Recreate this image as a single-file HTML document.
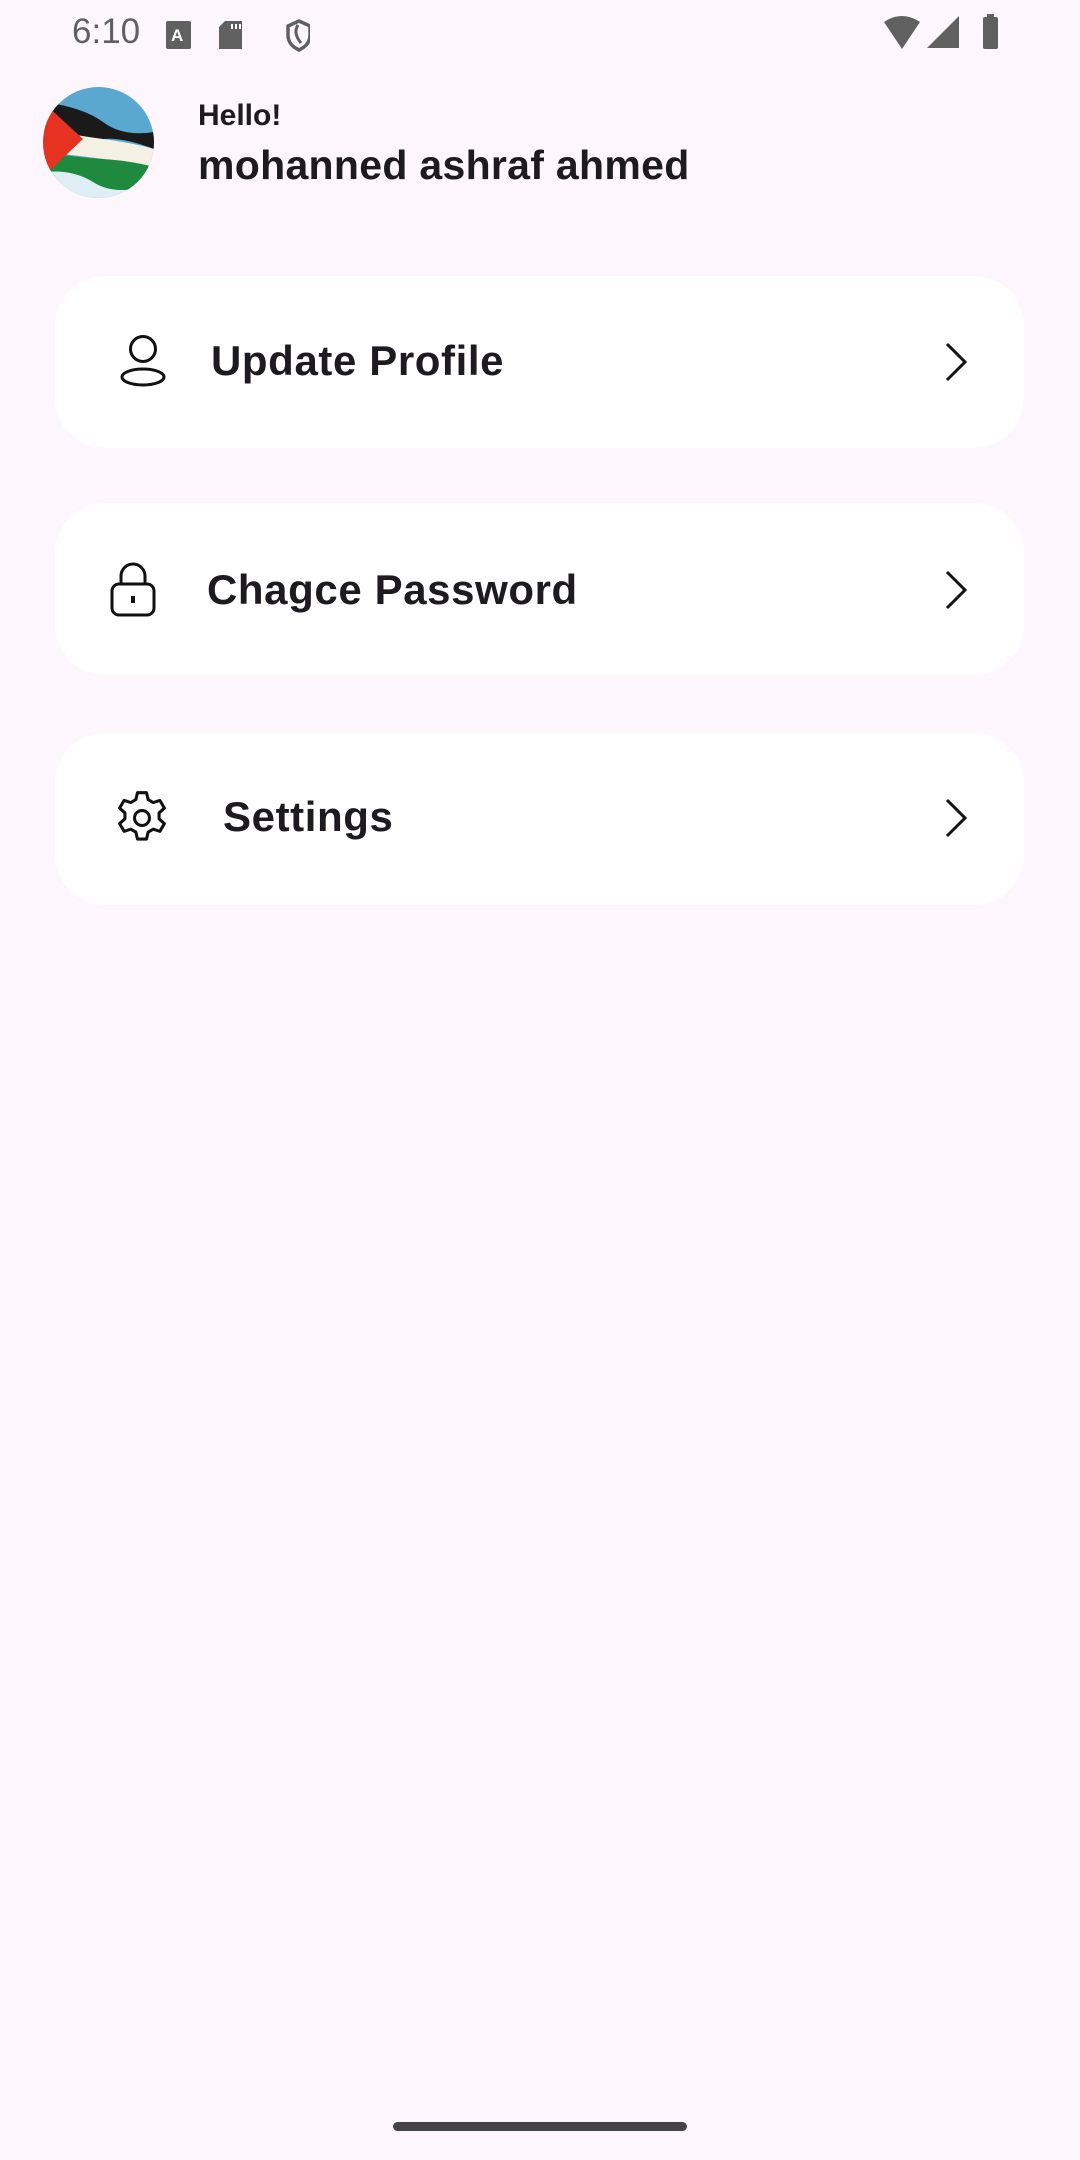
<!DOCTYPE html>
<html><head><meta charset="utf-8"><style>
*{margin:0;padding:0;box-sizing:border-box}
body{width:1080px;height:2160px;background:#fdf7fd;font-family:"Liberation Sans",sans-serif;position:relative;overflow:hidden;color:#1d1b20}
.abs{position:absolute}
.card{position:absolute;left:55px;width:969px;height:172px;background:#fff;border-radius:50px}
.lbl{position:absolute;font-size:42px;font-weight:bold;color:#1d1b20;line-height:1;letter-spacing:0.6px}
</style></head><body>
<div class="abs" style="left:72px;top:12px;font-size:35px;color:#606060">6:10</div>
<svg class="abs" style="left:160px;top:17px" width="150" height="36" viewBox="0 0 150 36">
<rect x="6" y="4" width="25" height="28" rx="2" fill="#606060"/><text x="11" y="24" font-size="17" font-weight="bold" fill="#fff" font-family="Liberation Sans">A</text>
<path d="M65 4h17v28h-23v-22z" fill="#606060"/><rect x="71" y="7" width="2" height="5" fill="#fff"/><rect x="75" y="7" width="2" height="5" fill="#fff"/><rect x="79" y="7" width="2" height="5" fill="#fff"/>
<path d="M139 4l11 5v9c0 8-5 12-11 15-6-3-11-7-11-15v-9z" fill="none" stroke="#606060" stroke-width="3.5"/><path d="M138 8c-4 6-2 12 3 18" fill="none" stroke="#606060" stroke-width="3"/>
</svg>
<svg class="abs" style="left:880px;top:14px" width="125" height="38" viewBox="0 0 125 38">
<path d="M4 8q18-12 36 0l-18 27z" fill="#606060"/>
<path d="M47 34l32-32v32z" fill="#606060"/>
<rect x="103" y="3" width="15" height="32" rx="2" fill="#606060"/><rect x="107" y="0" width="7" height="4" fill="#606060"/>
</svg>
<svg class="abs" style="left:43px;top:87px" width="111" height="111" viewBox="0 0 111 111">
<defs><clipPath id="c"><circle cx="55.5" cy="55.5" r="55.5"/></clipPath></defs>
<g clip-path="url(#c)">
<rect width="111" height="111" fill="#5aa7cf"/>
<rect y="80" width="111" height="31" fill="#dfeef5"/>
<path d="M0 15 Q40 20 60 35 T111 45 L111 62 Q80 50 60 52 T0 42z" fill="#1a1a1a"/>
<path d="M0 42 Q30 48 60 52 T111 62 L111 80 Q80 75 60 72 T0 65z" fill="#f4f0e4"/>
<path d="M0 65 Q30 70 60 72 T111 80 L100 100 Q70 108 50 95 T0 85z" fill="#1f8a3e"/>
<path d="M0 15 L40 52 L0 90z" fill="#e53221"/>
</g></svg>
<div class="abs" style="left:198px;top:99px;font-size:30px;font-weight:bold">Hello!</div>
<div class="abs" style="left:198px;top:142px;font-size:41px;font-weight:bold;letter-spacing:0.3px">mohanned ashraf ahmed</div>

<div class="card" style="top:276px"></div>
<div class="card" style="top:503px"></div>
<div class="card" style="top:733px"></div>

<svg class="abs" style="left:118px;top:334px" width="50" height="56" viewBox="0 0 50 56" fill="none" stroke="#111" stroke-width="3">
<circle cx="25" cy="15" r="12.5"/><ellipse cx="25" cy="43" rx="21" ry="8"/></svg>
<div class="lbl" style="left:211px;top:340px">Update Profile</div>

<svg class="abs" style="left:108px;top:560px" width="52" height="60" viewBox="0 0 52 60" fill="none" stroke="#111" stroke-width="3">
<path d="M13 24v-8a12 12 0 0 1 24 0v8"/><rect x="4" y="24" width="42" height="31" rx="7"/><path d="M25 36v7" stroke-width="4"/></svg>
<div class="lbl" style="left:207px;top:569px">Chagce Password</div>

<svg class="abs" style="left:110px;top:786px" width="64" height="64" viewBox="0 0 24 24" fill="none" stroke="#111" stroke-width="1.15" stroke-linejoin="round">
<path d="M10.3 2.5h3.4l.6 2.6 1.9 1.1 2.5-.8 1.7 2.9-2 1.8v2.2l2 1.8-1.7 2.9-2.5-.8-1.9 1.1-.6 2.6h-3.4l-.6-2.6-1.9-1.1-2.5.8-1.7-2.9 2-1.8v-2.2l-2-1.8 1.7-2.9 2.5.8 1.9-1.1z"/><circle cx="12" cy="12" r="2.8"/></svg>
<div class="lbl" style="left:223px;top:796px">Settings</div>

<svg class="abs" style="left:940px;top:340px" width="32" height="44" viewBox="0 0 32 44" fill="none" stroke="#111" stroke-width="3"><path d="M7 4l18 18-18 18"/></svg>
<svg class="abs" style="left:940px;top:568px" width="32" height="44" viewBox="0 0 32 44" fill="none" stroke="#111" stroke-width="3"><path d="M7 4l18 18-18 18"/></svg>
<svg class="abs" style="left:940px;top:796px" width="32" height="44" viewBox="0 0 32 44" fill="none" stroke="#111" stroke-width="3"><path d="M7 4l18 18-18 18"/></svg>

<div class="abs" style="left:393px;top:2122px;width:294px;height:9px;border-radius:5px;background:#444"></div>
</body></html>
